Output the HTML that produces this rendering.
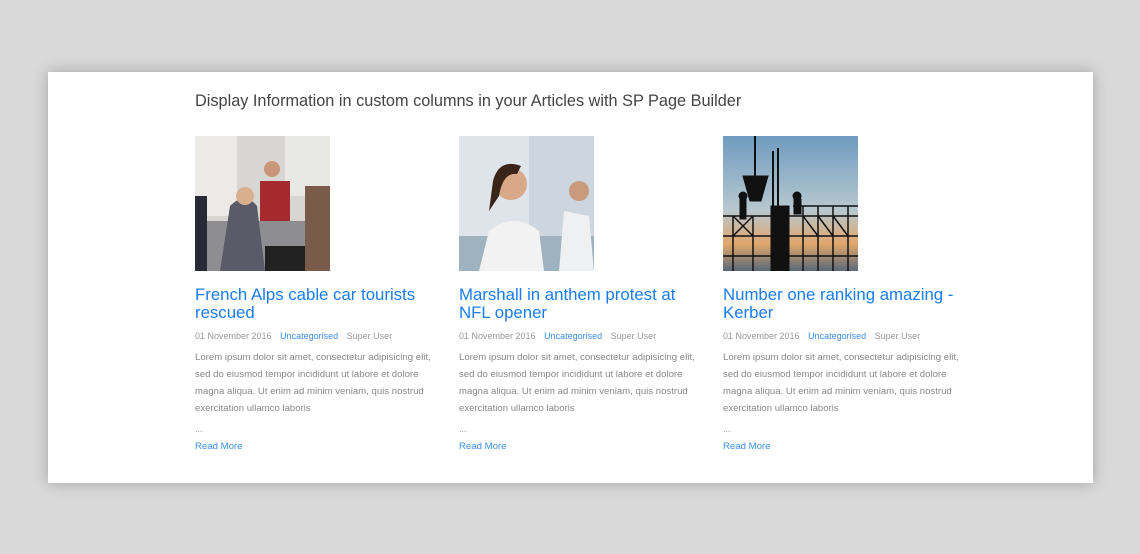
<!DOCTYPE html>
<html><head><meta charset="utf-8"><style>
body{margin:0;width:1140px;height:554px;background:#d9d9d9;font-family:"Liberation Sans","DejaVu Sans",sans-serif;position:relative;overflow:hidden}
.card{position:absolute;left:48px;top:72px;width:1045px;height:411px;background:#fff;box-shadow:0 0 14px rgba(0,0,0,.25)}
h1{position:absolute;left:195px;top:92px;margin:0;font-weight:normal;font-size:16.3px;color:#444;white-space:nowrap}
.col{position:absolute;top:136px;width:250px}
.img{width:135px;height:135px;display:block}
.t{margin:15px 0 0;font-size:16.8px;line-height:17.5px;color:#1a7cf0;font-weight:normal;width:238px}
.m{font-size:9px;color:#999;margin-top:10px}
.m span{color:#3a8ee6;margin:0 6px}
.p{font-size:9.6px;line-height:17px;color:#888;margin-top:8px}
.d{font-size:9px;color:#999;margin-top:7px;line-height:10px}
.r{font-size:9.6px;color:#3a8ee6;margin-top:7px}
</style></head><body>
<div class="card"></div>
<h1>Display Information in custom columns in your Articles with SP Page Builder</h1>

<div class="col" style="left:195px">
<svg class="img" viewBox="0 0 135 135"><rect width="135" height="135" fill="#d8d6d2"/><rect x="0" y="0" width="42" height="80" fill="#eceae6"/><rect x="90" y="0" width="45" height="60" fill="#e8e8e4"/><rect x="65" y="45" width="30" height="40" fill="#a52a2e"/><circle cx="77" cy="33" r="8" fill="#c9967a"/><rect x="0" y="85" width="135" height="50" fill="#8e8e92"/><path d="M35 70 Q50 55 62 70 L70 135 L25 135Z" fill="#5a5a68"/><circle cx="50" cy="60" r="9" fill="#d8b08e"/><rect x="110" y="50" width="25" height="85" fill="#7a5a48"/><rect x="0" y="60" width="12" height="75" fill="#2a2a36"/><rect x="70" y="110" width="40" height="25" fill="#222"/></svg>
<h2 class="t">French Alps cable car tourists rescued</h2>
<div class="m">01 November 2016 <span>Uncategorised</span> Super User</div>
<div class="p">Lorem ipsum dolor sit amet, consectetur adipisicing elit, sed do eiusmod tempor incididunt ut labore et dolore magna aliqua. Ut enim ad minim veniam, quis nostrud exercitation ullamco laboris</div>
<div class="d">...</div><div class="r">Read More</div>
</div>

<div class="col" style="left:459px">
<svg class="img" viewBox="0 0 135 135"><rect width="135" height="135" fill="#dfe4ea"/><rect x="70" y="0" width="65" height="135" fill="#cdd6de"/><rect x="0" y="100" width="135" height="35" fill="#9fb2c0"/><path d="M30 95 Q55 75 80 95 L85 135 L20 135Z" fill="#f2f2f2"/><circle cx="52" cy="48" r="16" fill="#d8a888"/><path d="M34 45 Q40 22 62 30 L58 38 Q44 36 40 60 L30 75Z" fill="#3a2418"/><path d="M105 75 L130 80 L135 135 L100 135Z" fill="#eef0f2"/><circle cx="120" cy="55" r="10" fill="#c99a7c"/></svg>
<h2 class="t">Marshall in anthem protest at NFL opener</h2>
<div class="m">01 November 2016 <span>Uncategorised</span> Super User</div>
<div class="p">Lorem ipsum dolor sit amet, consectetur adipisicing elit, sed do eiusmod tempor incididunt ut labore et dolore magna aliqua. Ut enim ad minim veniam, quis nostrud exercitation ullamco laboris</div>
<div class="d">...</div><div class="r">Read More</div>
</div>

<div class="col" style="left:723px">
<svg class="img" viewBox="0 0 135 135"><defs><linearGradient id="s" x1="0" y1="0" x2="0" y2="1"><stop offset="0" stop-color="#6e9cc0"/><stop offset=".55" stop-color="#b8c8d0"/><stop offset=".8" stop-color="#e0a66c"/><stop offset="1" stop-color="#5a6878"/></linearGradient></defs><rect width="135" height="135" fill="url(#s)"/><g fill="#111" stroke="#111"><rect x="48" y="70" width="18" height="65"/><path d="M20 40 L45 40 L38 65 L27 65Z"/><line x1="32" y1="0" x2="32" y2="40" stroke-width="2"/><line x1="50" y1="15" x2="50" y2="70" stroke-width="2"/><line x1="55" y1="12" x2="55" y2="70" stroke-width="2"/><circle cx="20" cy="60" r="4"/><rect x="17" y="63" width="6" height="20"/><circle cx="74" cy="60" r="4"/><rect x="71" y="63" width="7" height="15"/></g><g stroke="#111" stroke-width="1.5" fill="none"><path d="M0 80 H135 M0 100 H135 M0 120 H135 M70 70 H135"/><path d="M10 80 V135 M30 80 V135 M80 70 V135 M95 70 V135 M110 70 V135 M125 70 V135 M10 80 L30 100 M30 80 L10 100 M80 80 L95 100 M95 80 L110 100 M110 80 L125 100"/></g></svg>
<h2 class="t">Number one ranking amazing - Kerber</h2>
<div class="m">01 November 2016 <span>Uncategorised</span> Super User</div>
<div class="p">Lorem ipsum dolor sit amet, consectetur adipisicing elit, sed do eiusmod tempor incididunt ut labore et dolore magna aliqua. Ut enim ad minim veniam, quis nostrud exercitation ullamco laboris</div>
<div class="d">...</div><div class="r">Read More</div>
</div>
</body></html>
